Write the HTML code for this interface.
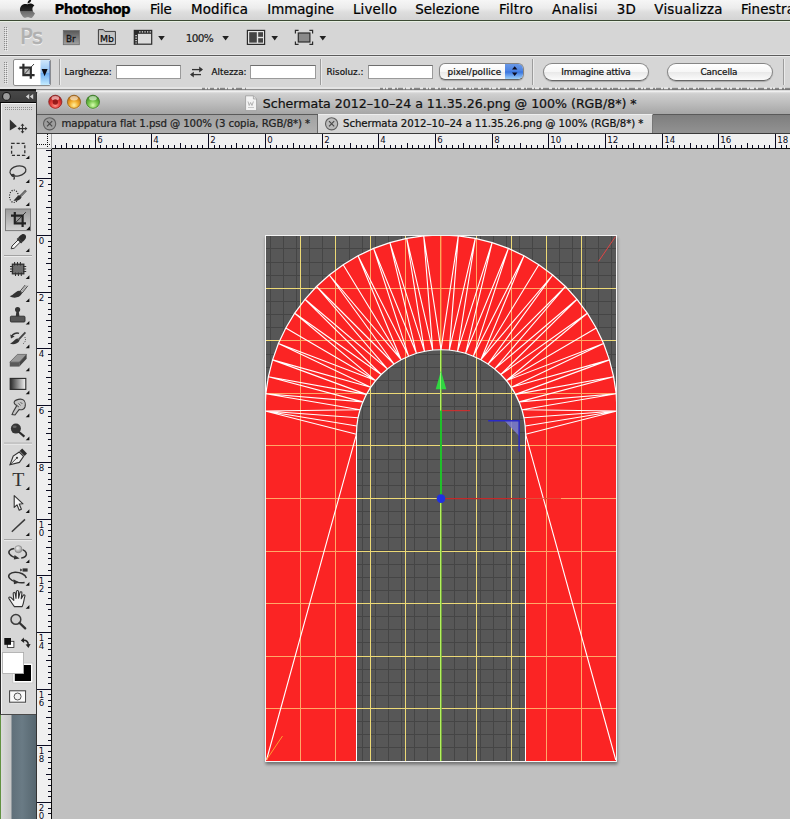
<!DOCTYPE html>
<html><head><meta charset="utf-8"><title>Photoshop</title><style>
html,body{margin:0;padding:0}
body{width:790px;height:819px;position:relative;overflow:hidden;background:#c0c0c0;font-family:"DejaVu Sans","Liberation Sans",sans-serif}
.abs{position:absolute}
.t{position:absolute;white-space:pre;line-height:normal;-webkit-text-stroke:0.22px currentColor}
#menubar{left:0;top:0;width:790px;height:20px;background:linear-gradient(#f6f6f6,#ececec 40%,#dedede 60%,#d4d4d4)}
#menuline{left:0;top:20px;width:790px;height:1px;background:#3c4a34}
#menuline2{left:0;top:21px;width:790px;height:1px;background:#e8f0e4}
#appbar{left:0;top:22px;width:790px;height:32px;background:#d6d6d6}
#appline{left:0;top:54px;width:790px;height:3px;background:linear-gradient(#e6e6e6 0,#e6e6e6 1px,#5c5c5c 1px,#5c5c5c 2px,#e9e9e9 2px)}
#optbar{left:0;top:57px;width:790px;height:32px;background:#d6d6d6}
#optline{left:0;top:87px;width:790px;height:2px;background:#e4e4e4}
#gap{left:0;top:89px;width:790px;height:3px;background:linear-gradient(#8c8c8c 0,#8c8c8c 1px,#dadada 1px)}
#tools{left:0;top:103px;width:36px;height:612px;background:#d7d7d7;border-left:1px solid #2a2a2a;border-bottom:1px solid #4a4a4a;box-sizing:border-box;box-shadow:inset 1px 1px 0 #f4f4f4}
#toolhead{left:0;top:89px;width:36px;height:14px;background:linear-gradient(#1a1a1a 0,#1a1a1a 2px,#484848 2px,#3c3c3c 13px,#050505 13px)}
#desk{left:0;top:715px;width:36px;height:104px;background:linear-gradient(90deg,#5a8a3a 0,#6a9a4a 1px,#dadada 1.5px,#c6c6c6 11px,#60707a 12px,#6a7b85 22px,#56666f 36px)}
#title{left:37px;top:91px;width:753px;height:23px;background:linear-gradient(#e2e2e2,#cfcfcf 8%,#bdbdbd 50%,#a6a6a6);border-top-left-radius:5px;border-top:1px solid #eee;box-sizing:border-box}
#tabbar{left:37px;top:114px;width:753px;height:20px;background:linear-gradient(#7e7e7e,#929292);border-top:1px solid #5a5a5a;border-bottom:1px solid #3a3a3a;box-sizing:border-box}
#tab1{left:37px;top:115px;width:281px;height:18px;background:linear-gradient(#a2a2a2,#b0b0b0);border-right:1px solid #6a6a6a;box-sizing:border-box}
#tab2{left:318px;top:114px;width:335px;height:19px;background:linear-gradient(#dcdcdc,#d2d2d2);border-right:1px solid #777;border-top:1px solid #eee;box-sizing:border-box}
#rulerh{left:37px;top:134px;width:753px;height:15px;background:#f0f0f0;border-bottom:1px solid #0c0c0c;box-sizing:border-box}
#rulerv{left:37px;top:134px;width:15px;height:685px;background:#f0f0f0;border-right:1px solid #0c0c0c;box-sizing:border-box}
#origin{left:37px;top:134px;width:15px;height:15px;background:#f0f0f0;border-right:1px solid #a4a4a4;border-bottom:1px solid #a4a4a4;box-sizing:border-box}
#docleft{left:36px;top:92px;width:1px;height:727px;background:#333}
svg text{font-family:"DejaVu Sans","Liberation Sans",sans-serif}
.inp{background:#fff;border:1px solid #9a9a9a;border-top-color:#6e6e6e;box-sizing:border-box}
.btn{border:1px solid #868686;border-bottom-color:#666;border-radius:9px;background:linear-gradient(#ffffff,#f6f6f6 50%,#e9e9e9 52%,#fbfbfb);box-sizing:border-box;box-shadow:0 1px 1px rgba(0,0,0,.22)}
.vsep{width:1px;background:#9c9c9c;box-shadow:1px 0 0 #eaeaea}
</style></head><body>
<div class="abs" id="menubar"></div><div class="abs" id="menuline"></div><div class="abs" id="menuline2"></div>
<div class="abs" id="appbar"></div><div class="abs" id="appline"></div>
<div class="abs" id="optbar"></div><div class="abs" id="optline"></div><div class="abs" id="gap"></div>
<div class="abs" id="title"></div>
<div class="abs" id="tabbar"></div><div class="abs" id="tab1"></div><div class="abs" id="tab2"></div>
<div class="abs" id="rulerh"></div><div class="abs" id="rulerv"></div><div class="abs" id="origin"></div><div class="abs" id="docleft"></div>
<div class="abs" id="tools"></div><div class="abs" id="toolhead"></div><div class="abs" id="desk"></div>
<svg class="abs" style="left:0;top:86px" width="790" height="5" viewBox="0 86 790 5"><path d="M202,88.6H246M380,88.6H790" stroke="#3a3a3a" stroke-opacity="0.55" stroke-width="1.6" stroke-dasharray="3 2 1 2 4 3 2 1 5 2 1 4 2 2 6 3"/></svg>
<!-- options bar widgets -->
<div class="abs inp" style="left:115.5px;top:65px;width:65px;height:14px"></div>
<div class="abs inp" style="left:250px;top:65px;width:66px;height:14px"></div>
<div class="abs inp" style="left:367.5px;top:65px;width:65.5px;height:14px"></div>
<div class="abs vsep" style="left:59px;top:59px;height:26px"></div>
<div class="abs vsep" style="left:320px;top:59px;height:26px"></div>
<div class="abs vsep" style="left:532px;top:59px;height:26px"></div>
<div class="abs vsep" style="left:783px;top:59px;height:26px"></div>
<div class="abs btn" style="left:439px;top:62.5px;width:85px;height:17.5px;border-radius:6px;overflow:hidden"><div class="abs" style="right:0;top:0;width:18px;height:100%;background:linear-gradient(#6a98e6,#4a82e2 48%,#3672de 52%,#9cd0fa)"></div></div>
<div class="abs btn" style="left:543px;top:62.5px;width:105.5px;height:18px"></div>
<div class="abs btn" style="left:666.5px;top:62.5px;width:106.5px;height:18px"></div>
<svg class="abs" style="left:0;top:0" width="790" height="819" viewBox="0 0 790 819">
<defs><clipPath id="redclip"><path d="M265,411.0 L265.0,411.0 L265.8,393.7 L268.4,376.7 L272.6,359.9 L278.4,343.6 L285.8,328.0 L294.7,313.2 L305.0,299.3 L316.5,286.5 L329.3,275.0 L343.2,264.7 L358.0,255.8 L373.6,248.4 L389.9,242.6 L406.7,238.4 L423.7,235.8 L441.0,235.0 L458.3,235.8 L475.3,238.4 L492.1,242.6 L508.4,248.4 L524.0,255.8 L538.8,264.7 L552.7,275.0 L565.5,286.5 L577.0,299.3 L587.3,313.2 L596.2,328.0 L603.6,343.6 L609.4,359.9 L613.6,376.7 L616.2,393.7 L617.0,411.0 L617,411.0 L617,762 L526.0,762 L526.0,434.3 A84.6,84.6 0 0 0 356.0,434.3 L356.0,762 L265,762 Z"/></clipPath>
<clipPath id="imgclip"><rect x="265" y="235" width="352" height="527"/></clipPath>
<filter id="sh" x="-10%" y="-10%" width="120%" height="120%"><feGaussianBlur stdDeviation="1.8"/></filter></defs>
<rect x="265.5" y="237.5" width="352" height="527" fill="#000" opacity="0.4" filter="url(#sh)"/>
<rect x="265" y="235" width="352" height="527" fill="#575757"/>
<g clip-path="url(#imgclip)">
<path d="M270.5,235V762 M283.5,235V762 M296.5,235V762 M309.5,235V762 M322.5,235V762 M335.5,235V762 M349.5,235V762 M362.5,235V762 M375.5,235V762 M388.5,235V762 M401.5,235V762 M414.5,235V762 M427.5,235V762 M441.5,235V762 M454.5,235V762 M467.5,235V762 M480.5,235V762 M493.5,235V762 M506.5,235V762 M519.5,235V762 M532.5,235V762 M546.5,235V762 M559.5,235V762 M572.5,235V762 M585.5,235V762 M598.5,235V762 M611.5,235V762 M265,248.5H617 M265,262.5H617 M265,275.5H617 M265,288.5H617 M265,301.5H617 M265,314.5H617 M265,327.5H617 M265,340.5H617 M265,354.5H617 M265,367.5H617 M265,380.5H617 M265,393.5H617 M265,406.5H617 M265,419.5H617 M265,432.5H617 M265,445.5H617 M265,459.5H617 M265,472.5H617 M265,485.5H617 M265,498.5H617 M265,511.5H617 M265,524.5H617 M265,537.5H617 M265,550.5H617 M265,564.5H617 M265,577.5H617 M265,590.5H617 M265,603.5H617 M265,616.5H617 M265,629.5H617 M265,642.5H617 M265,656.5H617 M265,669.5H617 M265,682.5H617 M265,695.5H617 M265,708.5H617 M265,721.5H617 M265,734.5H617 M265,747.5H617 M265,761.5H617" stroke="#454545" stroke-width="1" fill="none" shape-rendering="crispEdges"/>
<path d="M300.5,235V762 M335.5,235V762 M370.5,235V762 M405.5,235V762 M476.5,235V762 M511.5,235V762 M546.5,235V762 M581.5,235V762 M265,288.5H617 M265,340.5H617 M265,393.5H617 M265,445.5H617 M265,498.5H617 M265,551.5H617 M265,603.5H617 M265,656.5H617 M265,708.5H617" stroke="#ecd976" stroke-width="1" fill="none" shape-rendering="crispEdges"/>
<rect x="440" y="235" width="1" height="527" fill="#b4f060"/><rect x="441" y="235" width="1" height="527" fill="#7cb838" opacity="0.8"/>
<path d="M265,411.0 L265.0,411.0 L265.8,393.7 L268.4,376.7 L272.6,359.9 L278.4,343.6 L285.8,328.0 L294.7,313.2 L305.0,299.3 L316.5,286.5 L329.3,275.0 L343.2,264.7 L358.0,255.8 L373.6,248.4 L389.9,242.6 L406.7,238.4 L423.7,235.8 L441.0,235.0 L458.3,235.8 L475.3,238.4 L492.1,242.6 L508.4,248.4 L524.0,255.8 L538.8,264.7 L552.7,275.0 L565.5,286.5 L577.0,299.3 L587.3,313.2 L596.2,328.0 L603.6,343.6 L609.4,359.9 L613.6,376.7 L616.2,393.7 L617.0,411.0 L617,411.0 L617,762 L526.0,762 L526.0,434.3 A84.6,84.6 0 0 0 356.0,434.3 L356.0,762 L265,762 Z" fill="#fb2424"/>
<g clip-path="url(#redclip)">
<path d="M300.5,235V762 M335.5,235V762 M370.5,235V762 M405.5,235V762 M476.5,235V762 M511.5,235V762 M546.5,235V762 M581.5,235V762 M265,288.5H617 M265,340.5H617 M265,393.5H617 M265,445.5H617 M265,498.5H617 M265,551.5H617 M265,603.5H617 M265,656.5H617 M265,708.5H617" stroke="#ffa868" stroke-width="1" fill="none" shape-rendering="crispEdges"/>
<rect x="440" y="235" width="1.4" height="125" fill="#ffa858"/>
</g>
<path d="M265.0,411.0L356.4,434.3 M617.0,411.0L525.6,434.3 M265.0,411.0L356.8,426.0 M617.0,411.0L525.2,426.0 M265.0,411.0L358.0,417.8 M617.0,411.0L524.0,417.8 M265.0,411.0L360.0,409.7 M617.0,411.0L522.0,409.7 M265.8,393.7L360.0,409.7 M616.2,393.7L522.0,409.7 M265.8,393.7L362.8,401.9 M616.2,393.7L519.2,401.9 M268.4,376.7L362.8,401.9 M613.6,376.7L519.2,401.9 M268.4,376.7L366.4,394.4 M613.6,376.7L515.6,394.4 M272.6,359.9L366.4,394.4 M609.4,359.9L515.6,394.4 M272.6,359.9L370.7,387.3 M609.4,359.9L511.3,387.3 M278.4,343.6L370.7,387.3 M603.6,343.6L511.3,387.3 M278.4,343.6L375.6,380.6 M603.6,343.6L506.4,380.6 M285.8,328.0L375.6,380.6 M596.2,328.0L506.4,380.6 M294.7,313.2L375.6,380.6 M587.3,313.2L506.4,380.6 M294.7,313.2L381.2,374.5 M587.3,313.2L500.8,374.5 M305.0,299.3L381.2,374.5 M577.0,299.3L500.8,374.5 M305.0,299.3L387.3,368.9 M577.0,299.3L494.7,368.9 M316.5,286.5L387.3,368.9 M565.5,286.5L494.7,368.9 M316.5,286.5L394.0,364.0 M565.5,286.5L488.0,364.0 M329.3,275.0L394.0,364.0 M552.7,275.0L488.0,364.0 M329.3,275.0L401.1,359.7 M552.7,275.0L480.9,359.7 M343.2,264.7L401.1,359.7 M538.8,264.7L480.9,359.7 M358.0,255.8L401.1,359.7 M524.0,255.8L480.9,359.7 M358.0,255.8L408.6,356.1 M524.0,255.8L473.4,356.1 M373.6,248.4L408.6,356.1 M508.4,248.4L473.4,356.1 M373.6,248.4L416.4,353.3 M508.4,248.4L465.6,353.3 M389.9,242.6L416.4,353.3 M492.1,242.6L465.6,353.3 M389.9,242.6L424.5,351.3 M492.1,242.6L457.5,351.3 M406.7,238.4L424.5,351.3 M475.3,238.4L457.5,351.3 M406.7,238.4L432.7,350.1 M475.3,238.4L449.3,350.1 M423.7,235.8L432.7,350.1 M458.3,235.8L449.3,350.1 M423.7,235.8L441.0,349.7 M458.3,235.8L441.0,349.7 M356.4,434.3L266.5,760.0 M525.6,434.3L615.8,760.0" stroke="#fff" stroke-width="1.12" fill="none"/>
<path d="M265.0,411.0 L265.8,393.7 L268.4,376.7 L272.6,359.9 L278.4,343.6 L285.8,328.0 L294.7,313.2 L305.0,299.3 L316.5,286.5 L329.3,275.0 L343.2,264.7 L358.0,255.8 L373.6,248.4 L389.9,242.6 L406.7,238.4 L423.7,235.8 L441.0,235.0 L458.3,235.8 L475.3,238.4 L492.1,242.6 L508.4,248.4 L524.0,255.8 L538.8,264.7 L552.7,275.0 L565.5,286.5 L577.0,299.3 L587.3,313.2 L596.2,328.0 L603.6,343.6 L609.4,359.9 L613.6,376.7 L616.2,393.7 L617.0,411.0" stroke="#fff" stroke-width="1.2" fill="none"/>
<path d="M356.4,434.3 A84.6,84.6 0 0 1 525.6,434.3" stroke="#fff" stroke-width="1.2" fill="none"/>
<path d="M356.5,434.3V762M525.5,434.3V762" stroke="#fff" stroke-width="1" fill="none" shape-rendering="crispEdges"/>
<path d="M441,410.6V498.5" stroke="#1fc02a" stroke-width="2"/>
<path d="M441,370.8L446.3,389.2H435.7Z" fill="#30d640"/><rect x="440" y="373" width="1" height="16" fill="#90f070"/>
<path d="M442,410.6H470" stroke="#c83030" stroke-width="1.2"/>
<path d="M441,498.6H525" stroke="#c42828" stroke-width="1.3"/>
<path d="M525,498.6H561" stroke="#d42020" stroke-width="1" opacity="0.7"/>
<path d="M504.7,421H519.1V436Z" fill="#7a7ad0" opacity="0.85"/>
<path d="M488.2,420.8H519.1V451.6" stroke="#2a2ac8" stroke-width="1.4" fill="none"/>
<circle cx="441" cy="498.6" r="4.3" fill="#2030e0"/>
<path d="M598.5,261.4L615.5,236.6" stroke="#e04444" stroke-width="1"/>
<path d="M266.6,759.7L282.5,736" stroke="#ffa030" stroke-width="1"/>
</g>
<rect x="265.5" y="235.5" width="351" height="526" fill="none" stroke="#f4f4f4" stroke-width="1"/>
</svg>
<svg class="abs" style="left:0;top:0" width="790" height="819" viewBox="0 0 790 819" shape-rendering="crispEdges" font-size="8.6" fill="#0a0a20">
<rect x="55" y="145" width="1" height="3"/>
<rect x="61" y="145" width="1" height="3"/>
<rect x="66" y="143" width="1" height="5"/>
<rect x="72" y="145" width="1" height="3"/>
<rect x="78" y="145" width="1" height="3"/>
<rect x="83" y="145" width="1" height="3"/>
<rect x="89" y="145" width="1" height="3"/>
<rect x="95" y="134" width="1" height="14"/>
<text x="97.3" y="142.6">6</text>
<rect x="100" y="145" width="1" height="3"/>
<rect x="106" y="145" width="1" height="3"/>
<rect x="112" y="145" width="1" height="3"/>
<rect x="117" y="145" width="1" height="3"/>
<rect x="123" y="143" width="1" height="5"/>
<rect x="129" y="145" width="1" height="3"/>
<rect x="134" y="145" width="1" height="3"/>
<rect x="140" y="145" width="1" height="3"/>
<rect x="146" y="145" width="1" height="3"/>
<rect x="151" y="134" width="1" height="14"/>
<text x="153.3" y="142.6">4</text>
<rect x="157" y="145" width="1" height="3"/>
<rect x="163" y="145" width="1" height="3"/>
<rect x="168" y="145" width="1" height="3"/>
<rect x="174" y="145" width="1" height="3"/>
<rect x="180" y="143" width="1" height="5"/>
<rect x="185" y="145" width="1" height="3"/>
<rect x="191" y="145" width="1" height="3"/>
<rect x="197" y="145" width="1" height="3"/>
<rect x="202" y="145" width="1" height="3"/>
<rect x="208" y="134" width="1" height="14"/>
<text x="210.3" y="142.6">2</text>
<rect x="214" y="145" width="1" height="3"/>
<rect x="219" y="145" width="1" height="3"/>
<rect x="225" y="145" width="1" height="3"/>
<rect x="231" y="145" width="1" height="3"/>
<rect x="236" y="143" width="1" height="5"/>
<rect x="242" y="145" width="1" height="3"/>
<rect x="248" y="145" width="1" height="3"/>
<rect x="253" y="145" width="1" height="3"/>
<rect x="259" y="145" width="1" height="3"/>
<rect x="265" y="134" width="1" height="14"/>
<text x="267.3" y="142.6">0</text>
<rect x="270" y="145" width="1" height="3"/>
<rect x="276" y="145" width="1" height="3"/>
<rect x="282" y="145" width="1" height="3"/>
<rect x="287" y="145" width="1" height="3"/>
<rect x="293" y="143" width="1" height="5"/>
<rect x="299" y="145" width="1" height="3"/>
<rect x="304" y="145" width="1" height="3"/>
<rect x="310" y="145" width="1" height="3"/>
<rect x="316" y="145" width="1" height="3"/>
<rect x="322" y="134" width="1" height="14"/>
<text x="324.3" y="142.6">2</text>
<rect x="327" y="145" width="1" height="3"/>
<rect x="333" y="145" width="1" height="3"/>
<rect x="339" y="145" width="1" height="3"/>
<rect x="344" y="145" width="1" height="3"/>
<rect x="350" y="143" width="1" height="5"/>
<rect x="356" y="145" width="1" height="3"/>
<rect x="361" y="145" width="1" height="3"/>
<rect x="367" y="145" width="1" height="3"/>
<rect x="373" y="145" width="1" height="3"/>
<rect x="378" y="134" width="1" height="14"/>
<text x="380.3" y="142.6">4</text>
<rect x="384" y="145" width="1" height="3"/>
<rect x="390" y="145" width="1" height="3"/>
<rect x="395" y="145" width="1" height="3"/>
<rect x="401" y="145" width="1" height="3"/>
<rect x="407" y="143" width="1" height="5"/>
<rect x="412" y="145" width="1" height="3"/>
<rect x="418" y="145" width="1" height="3"/>
<rect x="424" y="145" width="1" height="3"/>
<rect x="429" y="145" width="1" height="3"/>
<rect x="435" y="134" width="1" height="14"/>
<text x="437.3" y="142.6">6</text>
<rect x="441" y="145" width="1" height="3"/>
<rect x="446" y="145" width="1" height="3"/>
<rect x="452" y="145" width="1" height="3"/>
<rect x="458" y="145" width="1" height="3"/>
<rect x="463" y="143" width="1" height="5"/>
<rect x="469" y="145" width="1" height="3"/>
<rect x="475" y="145" width="1" height="3"/>
<rect x="480" y="145" width="1" height="3"/>
<rect x="486" y="145" width="1" height="3"/>
<rect x="492" y="134" width="1" height="14"/>
<text x="494.3" y="142.6">8</text>
<rect x="497" y="145" width="1" height="3"/>
<rect x="503" y="145" width="1" height="3"/>
<rect x="509" y="145" width="1" height="3"/>
<rect x="514" y="145" width="1" height="3"/>
<rect x="520" y="143" width="1" height="5"/>
<rect x="526" y="145" width="1" height="3"/>
<rect x="531" y="145" width="1" height="3"/>
<rect x="537" y="145" width="1" height="3"/>
<rect x="543" y="145" width="1" height="3"/>
<rect x="548" y="134" width="1" height="14"/>
<text x="550.3" y="142.6">10</text>
<rect x="554" y="145" width="1" height="3"/>
<rect x="560" y="145" width="1" height="3"/>
<rect x="565" y="145" width="1" height="3"/>
<rect x="571" y="145" width="1" height="3"/>
<rect x="577" y="143" width="1" height="5"/>
<rect x="582" y="145" width="1" height="3"/>
<rect x="588" y="145" width="1" height="3"/>
<rect x="594" y="145" width="1" height="3"/>
<rect x="599" y="145" width="1" height="3"/>
<rect x="605" y="134" width="1" height="14"/>
<text x="607.3" y="142.6">12</text>
<rect x="611" y="145" width="1" height="3"/>
<rect x="616" y="145" width="1" height="3"/>
<rect x="622" y="145" width="1" height="3"/>
<rect x="628" y="145" width="1" height="3"/>
<rect x="633" y="143" width="1" height="5"/>
<rect x="639" y="145" width="1" height="3"/>
<rect x="645" y="145" width="1" height="3"/>
<rect x="650" y="145" width="1" height="3"/>
<rect x="656" y="145" width="1" height="3"/>
<rect x="662" y="134" width="1" height="14"/>
<text x="664.3" y="142.6">14</text>
<rect x="667" y="145" width="1" height="3"/>
<rect x="673" y="145" width="1" height="3"/>
<rect x="679" y="145" width="1" height="3"/>
<rect x="684" y="145" width="1" height="3"/>
<rect x="690" y="143" width="1" height="5"/>
<rect x="696" y="145" width="1" height="3"/>
<rect x="701" y="145" width="1" height="3"/>
<rect x="707" y="145" width="1" height="3"/>
<rect x="713" y="145" width="1" height="3"/>
<rect x="718" y="134" width="1" height="14"/>
<text x="720.3" y="142.6">16</text>
<rect x="724" y="145" width="1" height="3"/>
<rect x="730" y="145" width="1" height="3"/>
<rect x="735" y="145" width="1" height="3"/>
<rect x="741" y="145" width="1" height="3"/>
<rect x="747" y="143" width="1" height="5"/>
<rect x="752" y="145" width="1" height="3"/>
<rect x="758" y="145" width="1" height="3"/>
<rect x="764" y="145" width="1" height="3"/>
<rect x="769" y="145" width="1" height="3"/>
<rect x="775" y="134" width="1" height="14"/>
<text x="777.3" y="142.6">18</text>
<rect x="781" y="145" width="1" height="3"/>
<rect x="786" y="145" width="1" height="3"/>
<rect x="46" y="150" width="5" height="1"/>
<rect x="48" y="156" width="3" height="1"/>
<rect x="48" y="161" width="3" height="1"/>
<rect x="48" y="167" width="3" height="1"/>
<rect x="48" y="173" width="3" height="1"/>
<rect x="37" y="178" width="14" height="1"/>
<text x="38.8" y="187.2">2</text>
<rect x="48" y="184" width="3" height="1"/>
<rect x="48" y="190" width="3" height="1"/>
<rect x="48" y="195" width="3" height="1"/>
<rect x="48" y="201" width="3" height="1"/>
<rect x="46" y="207" width="5" height="1"/>
<rect x="48" y="212" width="3" height="1"/>
<rect x="48" y="218" width="3" height="1"/>
<rect x="48" y="224" width="3" height="1"/>
<rect x="48" y="229" width="3" height="1"/>
<rect x="37" y="235" width="14" height="1"/>
<text x="38.8" y="244.2">0</text>
<rect x="48" y="241" width="3" height="1"/>
<rect x="48" y="246" width="3" height="1"/>
<rect x="48" y="252" width="3" height="1"/>
<rect x="48" y="258" width="3" height="1"/>
<rect x="46" y="263" width="5" height="1"/>
<rect x="48" y="269" width="3" height="1"/>
<rect x="48" y="275" width="3" height="1"/>
<rect x="48" y="280" width="3" height="1"/>
<rect x="48" y="286" width="3" height="1"/>
<rect x="37" y="292" width="14" height="1"/>
<text x="38.8" y="301.2">2</text>
<rect x="48" y="297" width="3" height="1"/>
<rect x="48" y="303" width="3" height="1"/>
<rect x="48" y="309" width="3" height="1"/>
<rect x="48" y="314" width="3" height="1"/>
<rect x="46" y="320" width="5" height="1"/>
<rect x="48" y="326" width="3" height="1"/>
<rect x="48" y="331" width="3" height="1"/>
<rect x="48" y="337" width="3" height="1"/>
<rect x="48" y="343" width="3" height="1"/>
<rect x="37" y="348" width="14" height="1"/>
<text x="38.8" y="357.2">4</text>
<rect x="48" y="354" width="3" height="1"/>
<rect x="48" y="360" width="3" height="1"/>
<rect x="48" y="365" width="3" height="1"/>
<rect x="48" y="371" width="3" height="1"/>
<rect x="46" y="377" width="5" height="1"/>
<rect x="48" y="382" width="3" height="1"/>
<rect x="48" y="388" width="3" height="1"/>
<rect x="48" y="394" width="3" height="1"/>
<rect x="48" y="399" width="3" height="1"/>
<rect x="37" y="405" width="14" height="1"/>
<text x="38.8" y="414.2">6</text>
<rect x="48" y="411" width="3" height="1"/>
<rect x="48" y="416" width="3" height="1"/>
<rect x="48" y="422" width="3" height="1"/>
<rect x="48" y="428" width="3" height="1"/>
<rect x="46" y="433" width="5" height="1"/>
<rect x="48" y="439" width="3" height="1"/>
<rect x="48" y="445" width="3" height="1"/>
<rect x="48" y="450" width="3" height="1"/>
<rect x="48" y="456" width="3" height="1"/>
<rect x="37" y="462" width="14" height="1"/>
<text x="38.8" y="471.2">8</text>
<rect x="48" y="467" width="3" height="1"/>
<rect x="48" y="473" width="3" height="1"/>
<rect x="48" y="479" width="3" height="1"/>
<rect x="48" y="484" width="3" height="1"/>
<rect x="46" y="490" width="5" height="1"/>
<rect x="48" y="496" width="3" height="1"/>
<rect x="48" y="501" width="3" height="1"/>
<rect x="48" y="507" width="3" height="1"/>
<rect x="48" y="513" width="3" height="1"/>
<rect x="37" y="519" width="14" height="1"/>
<text x="38.8" y="528.2">1</text>
<text x="38.8" y="535.8">0</text>
<rect x="48" y="524" width="3" height="1"/>
<rect x="48" y="530" width="3" height="1"/>
<rect x="48" y="536" width="3" height="1"/>
<rect x="48" y="541" width="3" height="1"/>
<rect x="46" y="547" width="5" height="1"/>
<rect x="48" y="553" width="3" height="1"/>
<rect x="48" y="558" width="3" height="1"/>
<rect x="48" y="564" width="3" height="1"/>
<rect x="48" y="570" width="3" height="1"/>
<rect x="37" y="575" width="14" height="1"/>
<text x="38.8" y="584.2">1</text>
<text x="38.8" y="591.8">2</text>
<rect x="48" y="581" width="3" height="1"/>
<rect x="48" y="587" width="3" height="1"/>
<rect x="48" y="592" width="3" height="1"/>
<rect x="48" y="598" width="3" height="1"/>
<rect x="46" y="604" width="5" height="1"/>
<rect x="48" y="609" width="3" height="1"/>
<rect x="48" y="615" width="3" height="1"/>
<rect x="48" y="621" width="3" height="1"/>
<rect x="48" y="626" width="3" height="1"/>
<rect x="37" y="632" width="14" height="1"/>
<text x="38.8" y="641.2">1</text>
<text x="38.8" y="648.8">4</text>
<rect x="48" y="638" width="3" height="1"/>
<rect x="48" y="643" width="3" height="1"/>
<rect x="48" y="649" width="3" height="1"/>
<rect x="48" y="655" width="3" height="1"/>
<rect x="46" y="660" width="5" height="1"/>
<rect x="48" y="666" width="3" height="1"/>
<rect x="48" y="672" width="3" height="1"/>
<rect x="48" y="677" width="3" height="1"/>
<rect x="48" y="683" width="3" height="1"/>
<rect x="37" y="689" width="14" height="1"/>
<text x="38.8" y="698.2">1</text>
<text x="38.8" y="705.8">6</text>
<rect x="48" y="694" width="3" height="1"/>
<rect x="48" y="700" width="3" height="1"/>
<rect x="48" y="706" width="3" height="1"/>
<rect x="48" y="711" width="3" height="1"/>
<rect x="46" y="717" width="5" height="1"/>
<rect x="48" y="723" width="3" height="1"/>
<rect x="48" y="728" width="3" height="1"/>
<rect x="48" y="734" width="3" height="1"/>
<rect x="48" y="740" width="3" height="1"/>
<rect x="37" y="745" width="14" height="1"/>
<text x="38.8" y="754.2">1</text>
<text x="38.8" y="761.8">8</text>
<rect x="48" y="751" width="3" height="1"/>
<rect x="48" y="757" width="3" height="1"/>
<rect x="48" y="762" width="3" height="1"/>
<rect x="48" y="768" width="3" height="1"/>
<rect x="46" y="774" width="5" height="1"/>
<rect x="48" y="779" width="3" height="1"/>
<rect x="48" y="785" width="3" height="1"/>
<rect x="48" y="791" width="3" height="1"/>
<rect x="48" y="796" width="3" height="1"/>
<rect x="37" y="802" width="14" height="1"/>
<text x="38.8" y="811.2">2</text>
<text x="38.8" y="818.8">0</text>
<rect x="48" y="808" width="3" height="1"/>
<rect x="48" y="813" width="3" height="1"/>
<rect x="48" y="819" width="3" height="1"/>
</svg>
<svg class="abs" style="left:0;top:0" width="790" height="819" viewBox="0 0 790 819"><defs>
<linearGradient id="apg" x1="0" y1="0" x2="0" y2="1"><stop offset="0" stop-color="#0c0c0c"/><stop offset="0.5" stop-color="#2a2a2a"/><stop offset="0.56" stop-color="#6c6c6c"/><stop offset="1" stop-color="#8c8c8c"/></linearGradient>
<linearGradient id="brg" x1="0" y1="0" x2="0" y2="1"><stop offset="0" stop-color="#585858"/><stop offset="1" stop-color="#a2a2a2"/></linearGradient>
<linearGradient id="mbg" x1="0" y1="0" x2="0" y2="1"><stop offset="0" stop-color="#bcbcbc"/><stop offset="1" stop-color="#d4d4d4"/></linearGradient>
<linearGradient id="cropbg" x1="0" y1="0" x2="0" y2="1"><stop offset="0" stop-color="#9a9a9a"/><stop offset="1" stop-color="#d2d2d2"/></linearGradient>
<linearGradient id="gradtool" x1="0" y1="0" x2="1" y2="0"><stop offset="0" stop-color="#2a2a2a"/><stop offset="1" stop-color="#f8f8f8"/></linearGradient>
<linearGradient id="bluebtn" x1="0" y1="0" x2="0" y2="1"><stop offset="0" stop-color="#cfe6fb"/><stop offset="0.5" stop-color="#8fc0f2"/><stop offset="0.52" stop-color="#6aaaf0"/><stop offset="1" stop-color="#c4ecff"/></linearGradient>
<radialGradient id="redb" cx="0.5" cy="0.75" r="0.7"><stop offset="0" stop-color="#ff9a90"/><stop offset="0.45" stop-color="#e8413c"/><stop offset="1" stop-color="#a81818"/></radialGradient>
<radialGradient id="yelb" cx="0.5" cy="0.75" r="0.7"><stop offset="0" stop-color="#fff0a0"/><stop offset="0.45" stop-color="#f4b030"/><stop offset="1" stop-color="#b86a10"/></radialGradient>
<radialGradient id="grnb" cx="0.5" cy="0.75" r="0.7"><stop offset="0" stop-color="#d8ffb0"/><stop offset="0.45" stop-color="#7cc850"/><stop offset="1" stop-color="#3a8a20"/></radialGradient>
<radialGradient id="sph" cx="0.4" cy="0.35" r="0.7"><stop offset="0" stop-color="#f4f4f4"/><stop offset="1" stop-color="#8a8a8a"/></radialGradient>
</defs>
<path d="M27.6,4.2 C28.6,4.1 30.6,3.0 31.6,3.7 C32.9,3.9 33.8,4.6 34.4,5.5 C32.6,6.6 32.2,8.4 32.5,10 C32.8,11.6 33.8,12.6 35,13.1 C34.4,14.8 33.4,16.4 32.2,17.4 C31.2,18.2 30.2,17.9 29.2,17.5 C28.2,17.1 27.2,17.2 26.2,17.6 C25.2,18 24.4,18 23.5,17.2 C21.6,15.4 19.6,12 20,8.8 C20.3,6.2 22.3,4.2 24.6,4.1 C25.8,4 26.8,4.3 27.6,4.2 Z" fill="url(#apg)"/>
<path d="M27.6,3.4 C27.4,1.6 28.8,0.2 30.6,-0.6 L31.2,0 C31.2,1.6 29.6,3.2 27.6,3.4 Z" fill="#111"/>
<path d="M4,27h1M6,27h1M4,29h1M6,29h1M4,31h1M6,31h1M4,33h1M6,33h1M4,35h1M6,35h1M4,37h1M6,37h1M4,39h1M6,39h1M4,41h1M6,41h1M4,43h1M6,43h1M4,45h1M6,45h1M4,47h1M6,47h1M4,49h1M6,49h1M4,62h1M6,62h1M4,64h1M6,64h1M4,66h1M6,66h1M4,68h1M6,68h1M4,70h1M6,70h1M4,72h1M6,72h1M4,74h1M6,74h1M4,76h1M6,76h1M4,78h1M6,78h1M4,80h1M6,80h1M4,82h1M6,82h1" stroke="#8a8a8a" stroke-width="1" transform="translate(0,0.5)" shape-rendering="crispEdges"/>
<path d="M5,27h1M7,27h1M5,29h1M7,29h1M5,31h1M7,31h1M5,33h1M7,33h1M5,35h1M7,35h1M5,37h1M7,37h1M5,39h1M7,39h1M5,41h1M7,41h1M5,43h1M7,43h1M5,45h1M7,45h1M5,47h1M7,47h1M5,49h1M7,49h1M5,62h1M7,62h1M5,64h1M7,64h1M5,66h1M7,66h1M5,68h1M7,68h1M5,70h1M7,70h1M5,72h1M7,72h1M5,74h1M7,74h1M5,76h1M7,76h1M5,78h1M7,78h1M5,80h1M7,80h1M5,82h1M7,82h1" stroke="#f2f2f2" stroke-width="1" transform="translate(0,1.5)" shape-rendering="crispEdges" opacity="0.8"/>
<text x="20.1" y="45.2" font-size="21" fill="#f6f6f6" stroke="#f6f6f6" stroke-width="0.7" letter-spacing="-0.4">Ps</text>
<text x="20.1" y="44.3" font-size="21" fill="#b0b0b0" stroke="#b0b0b0" stroke-width="0.7" letter-spacing="-0.4">Ps</text>
<rect x="63.3" y="30.5" width="16" height="14.2" fill="url(#brg)" stroke="#6c6c6c" stroke-width="0.8"/>
<text x="66" y="42.4" font-size="8.8" fill="#d0d0d0" opacity="0.6">Br</text>
<text x="66" y="41.6" font-size="8.8" fill="#0c0c0c" stroke="#0c0c0c" stroke-width="0.3">Br</text>
<path d="M98.4,44.4V29.6H103.2L105,31.4H115.4V44.4Z" fill="url(#mbg)" stroke="#3c3c3c" stroke-width="1"/>
<text x="100" y="42" font-size="9.3" fill="#0c0c0c" stroke="#0c0c0c" stroke-width="0.25">Mb</text>
<rect x="134.3" y="30.4" width="17.4" height="13.8" fill="#dcdcdc" stroke="#2a2a2a" stroke-width="1.2"/>
<rect x="134.3" y="30.4" width="17.4" height="3.4" fill="#2a2a2a"/><rect x="134.3" y="30.4" width="3.6" height="13.8" fill="#2a2a2a"/>
<path d="M139.2,31.9h1.3M141.8,31.9h1.3M144.4,31.9h1.3M147,31.9h1.3M149.6,31.9h1.3" stroke="#e8e8e8" stroke-width="1.3"/>
<path d="M135.4,35.6h1.4M135.4,38.1h1.4M135.4,40.6h1.4M135.4,43h1.4" stroke="#e8e8e8" stroke-width="1.2"/>
<path d="M158.2,36h6.6l-3.3,4.4z" fill="#222"/>
<path d="M222.3,36h6.6l-3.3,4.4z" fill="#222"/>
<path d="M271.4,36h6.6l-3.3,4.4z" fill="#222"/>
<path d="M319.5,36h6.6l-3.3,4.4z" fill="#222"/>
<rect x="247.4" y="30.4" width="17.2" height="14" fill="#e4e4e4" stroke="#2c2c2c" stroke-width="1.2"/>
<rect x="249.2" y="32.2" width="7.6" height="10.4" fill="#444"/>
<rect x="258.2" y="32.2" width="4.8" height="4.6" fill="#444"/><rect x="258.2" y="38.2" width="4.8" height="4.4" fill="#444"/>
<rect x="298.3" y="33" width="11.6" height="9" fill="#8a8a8a" stroke="#2c2c2c" stroke-width="1.2"/>
<path d="M295.4,33.4V30.4H298.6M309.4,30.4H312.6V33.4M312.6,41.6V44.4H309.4M298.6,44.4H295.4V41.6" fill="none" stroke="#2c2c2c" stroke-width="1.2"/>
<rect x="13.5" y="59.5" width="37" height="26" rx="1.5" fill="#fff" stroke="#8c8c8c" stroke-width="1"/>
<path d="M40.5,60H48.6Q50,60 50,61.4V83.6Q50,85 48.6,85H40.5Z" fill="url(#bluebtn)"/><path d="M49.6,61V84" stroke="#5a7ab8" stroke-width="0.9" opacity="0.8"/>
<path d="M41.6,69h6l-3,7.2z" fill="#0a0a14"/>
<rect x="24.4" y="68.6" width="5.4" height="5.6" fill="#8a8a8a" opacity="0.55"/><g stroke="#2c2c2c" stroke-width="2.2" fill="none"><path d="M23.4,63.8V75.2H34.6"/><path d="M19.4,67.6H30.8V78.8"/></g><path d="M24,74.6L34,64" stroke="#2c2c2c" stroke-width="0.9"/>
<g fill="none" stroke="#333" stroke-width="1.3"><path d="M192,69.6H202"/><path d="M191,74.6H201"/></g><path d="M199.2,66.6L203,69.6L199.2,72.4Z" fill="#333"/><path d="M193.8,71.8L190,74.6L193.8,77.4Z" fill="#333"/>
<path d="M512,69.6L514.7,66.2L517.4,69.6Z M512,72.6L514.7,76L517.4,72.6Z" fill="#0c0c20"/>
<circle cx="6.5" cy="96.4" r="3.9" fill="#9c9c9c" stroke="#141414" stroke-width="1.1"/>
<path d="M29.2,94V99.2L25.8,96.6Z M33.2,94V99.2L29.8,96.6Z" fill="#d2d2d2"/>
<path d="M5,107h1M5,109h1M7,107h1M7,109h1M9,107h1M9,109h1M11,107h1M11,109h1M13,107h1M13,109h1M15,107h1M15,109h1M17,107h1M17,109h1M19,107h1M19,109h1M21,107h1M21,109h1M23,107h1M23,109h1M25,107h1M25,109h1M27,107h1M27,109h1M29,107h1M29,109h1M31,107h1M31,109h1" stroke="#8e8e8e" stroke-width="1" transform="translate(0,0.5)" shape-rendering="crispEdges"/>
<circle cx="55.3" cy="102.6" r="6.6" fill="#fff" opacity="0.55"/>
<circle cx="55.3" cy="101.8" r="6.6" fill="url(#redb)" stroke="#7a1010" stroke-width="0.7"/>
<ellipse cx="55.3" cy="98.3" rx="3.8" ry="2.2" fill="#fff" opacity="0.55"/>
<circle cx="74" cy="102.6" r="6.6" fill="#fff" opacity="0.55"/>
<circle cx="74" cy="101.8" r="6.6" fill="url(#yelb)" stroke="#8a5208" stroke-width="0.7"/>
<ellipse cx="74" cy="98.3" rx="3.8" ry="2.2" fill="#fff" opacity="0.55"/>
<circle cx="92.9" cy="102.6" r="6.6" fill="#fff" opacity="0.55"/>
<circle cx="92.9" cy="101.8" r="6.6" fill="url(#grnb)" stroke="#2a6a14" stroke-width="0.7"/>
<ellipse cx="92.9" cy="98.3" rx="3.8" ry="2.2" fill="#fff" opacity="0.55"/>
<circle cx="55.3" cy="102" r="2.7" fill="#8e1414" opacity="0.9"/>
<path d="M245.6,95.8H253.4L256.6,99V110.6H245.6Z" fill="#f4f4f4" stroke="#9a9a9a" stroke-width="0.8"/><path d="M253.4,95.8V99H256.6" fill="#ddd" stroke="#9a9a9a" stroke-width="0.7"/><path d="M248,101.5l1.2,4 1.4,-3 1.4,3 1.4,-4" stroke="#aaa" fill="none" stroke-width="0.9"/><path d="M248,107.5h6" stroke="#bbb" stroke-width="0.8"/>
<circle cx="49.6" cy="123.8" r="6.1" fill="#8a8a8a" fill-opacity="0.35" stroke="#5e5e5e" stroke-width="1.1"/><path d="M47.0,121.2l5.2,5.2M52.2,121.2l-5.2,5.2" stroke="#4a4a4a" stroke-width="1.2"/>
<circle cx="331.6" cy="123.8" r="6.1" fill="#8a8a8a" fill-opacity="0.35" stroke="#5e5e5e" stroke-width="1.1"/><path d="M329.0,121.2l5.2,5.2M334.20000000000005,121.2l-5.2,5.2" stroke="#4a4a4a" stroke-width="1.2"/>
<path d="M47.5,134V147" stroke="#111" stroke-width="1" stroke-dasharray="1,1" shape-rendering="crispEdges"/><path d="M37,144.5H50" stroke="#111" stroke-width="1" stroke-dasharray="1,1" shape-rendering="crispEdges"/>
<path d="M9.8,119.6L16.9,126.3L9.8,130.4Z" fill="#303030"/>
<g stroke="#303030" stroke-width="1.1" fill="none"><path d="M22.5,125.2V132M19.1,128.6H25.9"/></g><path d="M22.5,123.6l1.9,2.2h-3.8zM22.5,133.4l1.9,-2.2h-3.8zM17.6,128.6l2.2,-1.9v3.8zM27.4,128.6l-2.2,-1.9v3.8z" fill="#303030"/>
<rect x="11.6" y="143.4" width="13.2" height="12" fill="none" stroke="#303030" stroke-width="1.3" stroke-dasharray="3.1,1.9"/>
<path d="M29.4,155.4V159.1H25.7Z" fill="#111"/>
<g fill="none" stroke="#363636" stroke-width="1.25"><ellipse cx="17.9" cy="171" rx="8.1" ry="4.9" transform="rotate(-12 17.9 171)"/><path d="M11.6,174.4C11,176.2 13.4,177 14,175.4C14.4,174.2 12.6,174 12.2,175M13.6,176.2C14.6,177.4 14.6,178.6 13.6,179.6"/></g>
<path d="M29.4,179.2V182.9H25.7Z" fill="#111"/>
<ellipse cx="13.9" cy="196.3" rx="4.4" ry="6.2" fill="none" stroke="#1c1c1c" stroke-width="1.15" stroke-dasharray="1,1.45"/>
<path d="M13.4,200.4C15.6,201.4 19.8,200.8 21.6,197.2L20,195.2C17,195.4 16,198.6 13.4,200.4Z" fill="#303030"/><path d="M20.6,196L26,190.6" stroke="#3a3a3a" stroke-width="2.1"/><path d="M20.9,195.7L25.8,190.8" stroke="#d8d8d8" stroke-width="0.7"/>
<path d="M29.4,202.2V205.9H25.7Z" fill="#111"/>
<rect x="5.5" y="209" width="25" height="21.6" fill="url(#cropbg)" stroke="#7a7a7a" stroke-width="1"/>
<rect x="15.8" y="216.6" width="5.6" height="5.8" fill="#777" opacity="0.5"/><g stroke="#222" stroke-width="2.2" fill="none"><path d="M14.8,212V223.4H26"/><path d="M11,215.6H22.6V227"/></g><path d="M15.2,223L25.8,212.2" stroke="#222" stroke-width="0.9"/>
<path d="M30,226.3V230.0H26.3Z" fill="#111"/>
<path d="M11.2,248.8L12,246L19.4,238.6L21.6,240.8L14.2,248.2Z" fill="#f4f4f4" stroke="#333" stroke-width="1"/>
<path d="M18.2,237.6L22.6,242L24.6,240C26.6,238 26.4,236 25.2,234.8C24,233.6 22,233.6 20.2,235.6Z" fill="#2c2c2c"/><path d="M17.4,238.4L21.8,242.8" stroke="#2c2c2c" stroke-width="2"/>
<path d="M29.4,248.3V252.0H25.7Z" fill="#111"/>
<path d="M4,255.5H32" stroke="#a2a2a2" stroke-width="1"/><path d="M4,256.5H32" stroke="#ececec" stroke-width="1"/>
<path d="M4,443.2H32" stroke="#a2a2a2" stroke-width="1"/><path d="M4,444.2H32" stroke="#ececec" stroke-width="1"/>
<path d="M4,539.6H32" stroke="#a2a2a2" stroke-width="1"/><path d="M4,540.6H32" stroke="#ececec" stroke-width="1"/>
<rect x="12.4" y="264.2" width="11.4" height="9.6" fill="#6e6e6e" stroke="#303030" stroke-width="1.3"/>
<path d="M14.6,262v3.4M17.5,262v3.4M20.4,262v3.4M15.5,272.6v3.4M18.4,272.6v3.4M21.3,272.6v3.4M10,266.4h3.2M10,268.9h3.2M10,271.4h3.2M23,266.4h3.2M23,268.9h3.2M23,271.4h3.2" stroke="#303030" stroke-width="1.05"/>
<path d="M29.4,275.3V279.0H25.7Z" fill="#111"/>
<path d="M9.8,296.2C12.4,298.4 19.6,298.6 22,293.6C22.2,292 20.6,290.6 19,290.8C15.2,291.4 13.8,295 9.8,296.2Z" fill="#333"/><path d="M19.8,291.6L25.2,285M22,293.2L27.8,285.8" stroke="#3a3a3a" stroke-width="0.9" fill="none"/><path d="M21,292.2L26.4,285.6" stroke="#9a9a9a" stroke-width="1"/>
<path d="M29.4,298.3V302.0H25.7Z" fill="#111"/>
<rect x="10.4" y="316.2" width="14.6" height="5.8" rx="1" fill="#555" stroke="#2c2c2c" stroke-width="0.9"/><path d="M15.8,316.2L16.4,311.4H18.8L19.4,316.2Z" fill="#333"/><circle cx="17.6" cy="309.6" r="2.6" fill="#333"/>
<path d="M29.4,320.9V324.6H25.7Z" fill="#111"/>
<path d="M10,343.6C12.4,345 17.6,344.6 19.6,340.6L17.6,338.6C14.6,339 13.4,342.4 10,343.6Z" fill="#333"/><path d="M18.6,339.6L25.4,332.4" stroke="#444" stroke-width="1.9"/>
<path d="M11.6,336.4C13,333.6 16.4,332.4 19,333.4" fill="none" stroke="#333" stroke-width="1.4"/><path d="M10.2,334.4L11,338.4L14.6,336.6Z" fill="#333"/><path d="M24.8,337C26.4,339.6 25.2,343 22.2,344.2" fill="none" stroke="#555" stroke-width="1" stroke-dasharray="1,1.2"/>
<path d="M29.4,344.5V348.2H25.7Z" fill="#111"/>
<path d="M9.8,362.2L17.4,354.4H26.6L19.4,362.2Z" fill="#9a9a9a" stroke="#444" stroke-width="0.6"/><path d="M9.8,362.2H19.4V366.6H9.8Z" fill="#5a5a5a"/><path d="M19.4,362.2L26.6,354.4V358.8L19.4,366.6Z" fill="#444"/>
<path d="M29.4,367.5V371.2H25.7Z" fill="#111"/>
<rect x="10.2" y="378.4" width="15.6" height="11" fill="url(#gradtool)" stroke="#2a2a2a" stroke-width="1.1"/>
<path d="M29.4,390.5V394.2H25.7Z" fill="#111"/>
<path d="M12,414.6L13.4,411.4L16.8,405.6C14.6,404.4 13.4,402.6 14.6,401.2C16.2,399.4 20.4,398.6 22.6,399.6C25,400.6 25.8,404 25,407C24.2,409.4 21.6,410.2 19.2,409.4L15,415Z" fill="#c4c4c4" stroke="#3a3a3a" stroke-width="1.1"/><path d="M16.8,405.6L19,407M18.4,403.4L20.6,405.4M20.4,402L22.4,404" stroke="#555" stroke-width="0.9" fill="none"/>
<path d="M29.4,413.5V417.2H25.7Z" fill="#111"/>
<circle cx="15.9" cy="428.6" r="5" fill="#353535"/><path d="M19,432L24.4,436.6" stroke="#2a2a2a" stroke-width="2.1"/><ellipse cx="14.6" cy="426.8" rx="2" ry="1.3" fill="#777" opacity="0.7"/>
<path d="M29.4,436.5V440.2H25.7Z" fill="#111"/>
<path d="M10,464.8L13.2,456L19.2,452L23.6,456.4L19.4,462.4Z" fill="#ececec" stroke="#333" stroke-width="1.1"/><path d="M10,464.8L16.6,458.2" stroke="#333" stroke-width="0.9"/><circle cx="17" cy="457.8" r="1.1" fill="#333"/><path d="M19.6,451L22.2,448.6L27,453.4L24.6,456Z" fill="#2c2c2c"/>
<path d="M29.4,463.2V466.9H25.7Z" fill="#111"/>
<text x="12.2" y="486.2" style="font-family:'Liberation Serif','DejaVu Serif',serif" font-size="19.8" fill="#333">T</text>
<path d="M29.4,486.4V490.1H25.7Z" fill="#111"/>
<path d="M14.2,495.6V507.4L17,504.8L19.2,510.2L21.4,509.2L19.2,504L23,503.8Z" fill="#f6f6f6" stroke="#333" stroke-width="1.1" stroke-linejoin="round"/>
<path d="M29.4,509.2V512.9H25.7Z" fill="#111"/>
<path d="M11.8,531.8L25,519.4" stroke="#3a3a3a" stroke-width="1.5"/>
<path d="M29.4,532.4V536.1H25.7Z" fill="#111"/>
<circle cx="18.4" cy="549.2" r="3.6" fill="url(#sph)" stroke="#777" stroke-width="0.5"/>
<path d="M14.2,548.4C9.6,549 7.6,551.6 9.8,554.4C11.4,556.4 14.4,557.6 17,558" fill="none" stroke="#333" stroke-width="1.5"/><path d="M14.6,555L19.6,558.4L13.8,559.6Z" fill="#333"/><path d="M22.6,549.6C26.4,551 27.4,554.4 25.4,556.4C24.4,557.4 22.6,558 21.2,558" fill="none" stroke="#333" stroke-width="1.5"/>
<path d="M29.4,559.4V563.1H25.7Z" fill="#111"/>
<path d="M24.6,582.4C20,583.4 12.4,582 9.6,578.4C7.2,575.4 10,572.4 15,572.2C20,572 25.6,574.6 26.4,578" fill="none" stroke="#333" stroke-width="1.5"/><path d="M13.4,579.2L19.6,582.6L14,584.2Z" fill="#333"/><rect x="22.6" y="568.4" width="5" height="3.2" fill="#333"/><path d="M20.2,568.6L22.6,570L20.2,571.4Z" fill="#333"/>
<path d="M29.4,582.1V585.8H25.7Z" fill="#111"/>
<path d="M14.4,606.6C12.4,604.2 10.6,600.8 9,598.6C8.2,597.4 9.6,596.4 10.8,597.4L13.8,600.4L13.2,593.6C13.1,592.2 15,592 15.2,593.4L16,598.4L16.4,591.6C16.5,590.2 18.5,590.2 18.5,591.6L18.6,598.2L20,592.6C20.3,591.3 22.1,591.7 21.9,593L21.2,598.8L23.2,595.4C23.9,594.3 25.4,595.1 24.9,596.3C24,598.6 23.8,603.4 22.2,606.6Z" fill="#f2f2f2" stroke="#333" stroke-width="1.1" stroke-linejoin="round"/>
<path d="M29.4,605.1V608.8H25.7Z" fill="#111"/>
<circle cx="15.9" cy="619.4" r="4.9" fill="#cfcfcf" stroke="#3c3c3c" stroke-width="1.5"/><path d="M19.6,623L25.2,628.4" stroke="#333" stroke-width="2.3" stroke-linecap="round"/>
<rect x="7.3" y="641.3" width="6.6" height="6.2" fill="#fff" stroke="#222" stroke-width="0.8"/><rect x="4.3" y="638" width="6.7" height="6.8" fill="#111"/>
<path d="M23,640.4C26.4,639.8 28.4,642 28.2,645" fill="none" stroke="#222" stroke-width="1.5"/><path d="M23.8,637.6L20.8,640.6L24.2,643Z" fill="#222"/><path d="M25.6,644.4L28.4,648L30.6,644Z" fill="#222"/>
<rect x="12.6" y="662.8" width="20.6" height="20.4" fill="#b8b8b8"/><rect x="13.2" y="663.4" width="19.4" height="19.2" fill="#fff"/><rect x="14.8" y="665" width="16.2" height="16" fill="#000"/>
<rect x="2.6" y="652.6" width="21" height="21" fill="#fff" stroke="#aaa" stroke-width="0.8"/>
<rect x="10.4" y="692.4" width="16" height="11" fill="#fff" opacity="0.7"/><rect x="9.6" y="690.8" width="16" height="11.4" fill="#fafafa" stroke="#3c3c3c" stroke-width="1"/><circle cx="17.6" cy="696.5" r="3.5" fill="#f0f0f0" stroke="#555" stroke-width="1"/></svg>
<span class="t" style="left:54.6px;top:1.86px;font-size:13.4px;font-weight:bold;color:#000;letter-spacing:-0.549px;">Photoshop</span>
<span class="t" style="left:150.0px;top:1.86px;font-size:13.4px;font-weight:normal;color:#000;letter-spacing:-0.205px;">File</span>
<span class="t" style="left:191.0px;top:1.86px;font-size:13.4px;font-weight:normal;color:#000;letter-spacing:0.129px;">Modifica</span>
<span class="t" style="left:267.3px;top:1.86px;font-size:13.4px;font-weight:normal;color:#000;letter-spacing:-0.063px;">Immagine</span>
<span class="t" style="left:353.0px;top:1.86px;font-size:13.4px;font-weight:normal;color:#000;letter-spacing:0.145px;">Livello</span>
<span class="t" style="left:415.3px;top:1.86px;font-size:13.4px;font-weight:normal;color:#000;letter-spacing:-0.008px;">Selezione</span>
<span class="t" style="left:498.9px;top:1.86px;font-size:13.4px;font-weight:normal;color:#000;letter-spacing:0.262px;">Filtro</span>
<span class="t" style="left:552.0px;top:1.86px;font-size:13.4px;font-weight:normal;color:#000;letter-spacing:0.229px;">Analisi</span>
<span class="t" style="left:616.8px;top:1.86px;font-size:13.4px;font-weight:normal;color:#000;letter-spacing:0.178px;">3D</span>
<span class="t" style="left:654.3px;top:1.86px;font-size:13.4px;font-weight:normal;color:#000;letter-spacing:0.243px;">Visualizza</span>
<span class="t" style="left:740.9px;top:1.86px;font-size:13.4px;font-weight:normal;color:#000;letter-spacing:0.122px;">Finestra</span>
<span class="t" style="left:185.8px;top:31.96px;font-size:10.5px;font-weight:normal;color:#222;letter-spacing:-0.658px;">100%</span>
<span class="t" style="left:64.5px;top:66.63px;font-size:8.8px;font-weight:normal;color:#111;letter-spacing:-0.082px;">Larghezza:</span>
<span class="t" style="left:211.6px;top:66.63px;font-size:8.8px;font-weight:normal;color:#111;letter-spacing:0.010px;">Altezza:</span>
<span class="t" style="left:326.5px;top:66.63px;font-size:8.8px;font-weight:normal;color:#111;letter-spacing:0.009px;">Risoluz.:</span>
<span class="t" style="left:447.5px;top:66.73px;font-size:8.8px;font-weight:normal;color:#111;letter-spacing:0.104px;">pixel/pollice</span>
<span class="t" style="left:561.3px;top:66.83px;font-size:8.8px;font-weight:normal;color:#111;letter-spacing:-0.211px;">Immagine attiva</span>
<span class="t" style="left:700.5px;top:66.83px;font-size:8.8px;font-weight:normal;color:#111;letter-spacing:-0.093px;">Cancella</span>
<span class="t" style="left:262.8px;top:96.01px;font-size:12.6px;font-weight:normal;color:#111;letter-spacing:-0.026px;">Schermata 2012–10–24 a 11.35.26.png @ 100% (RGB/8*) *</span>
<span class="t" style="left:61.5px;top:118.03px;font-size:10.2px;font-weight:normal;color:#222;letter-spacing:-0.099px;">mappatura flat 1.psd @ 100% (3 copia, RGB/8*) *</span>
<span class="t" style="left:343.0px;top:118.03px;font-size:10.2px;font-weight:normal;color:#111;letter-spacing:-0.060px;">Schermata 2012–10–24 a 11.35.26.png @ 100% (RGB/8*) *</span>
</body></html>
